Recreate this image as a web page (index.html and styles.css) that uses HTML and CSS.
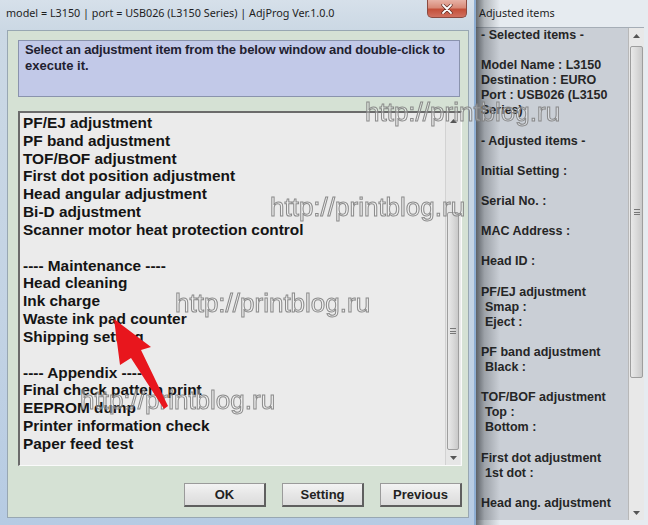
FILE: index.html
```html
<!DOCTYPE html>
<html>
<head>
<meta charset="utf-8">
<link rel="stylesheet" href="styles.css">
</head>
<body>
<div class="screen">
  <div class="main">
    <div class="titlebar">
      <span class="title">model = L3150 | port = USB026 (L3150 Series) | AdjProg Ver.1.0.0</span>
      <div class="close">
        <svg width="12" height="10" viewBox="0 0 12 10"><path d="M2 1 L10 9 M10 1 L2 9" stroke="#5a2a22" stroke-width="3.2" stroke-linecap="round"/><path d="M2 1 L10 9 M10 1 L2 9" stroke="#fff" stroke-width="1.8" stroke-linecap="round"/></svg>
      </div>
    </div>
    <div class="client">
      <div class="info"><span class="nowrap">Select an adjustment item from the below window and double-click to</span><br>execute it.</div>
      <div class="list">
        <div class="items">
          <div class="item">PF/EJ adjustment</div>
          <div class="item">PF band adjustment</div>
          <div class="item">TOF/BOF adjustment</div>
          <div class="item">First dot position adjustment</div>
          <div class="item">Head angular adjustment</div>
          <div class="item">Bi-D adjustment</div>
          <div class="item">Scanner motor heat protection control</div>
          <div class="item"></div>
          <div class="item">---- Maintenance ----</div>
          <div class="item">Head cleaning</div>
          <div class="item">Ink charge</div>
          <div class="item">Waste ink pad counter</div>
          <div class="item">Shipping setting</div>
          <div class="item"></div>
          <div class="item">---- Appendix ----</div>
          <div class="item">Final check pattern print</div>
          <div class="item">EEPROM dump</div>
          <div class="item">Printer information check</div>
          <div class="item">Paper feed test</div>
        </div>
        <div class="vscroll list-scroll">
          <div class="sarrow"><svg width="7" height="4" viewBox="0 0 7 4"><path d="M0 4 L3.5 0 L7 4Z" fill="#555"/></svg></div>
          <div class="track">
            <div class="thumb list-thumb"><span class="grip"></span></div>
          </div>
          <div class="sarrow"><svg width="7" height="4" viewBox="0 0 7 4"><path d="M0 0 L3.5 4 L7 0Z" fill="#555"/></svg></div>
        </div>
      </div>
      <div class="buttons">
        <button class="btn">OK</button>
        <button class="btn">Setting</button>
        <button class="btn">Previous</button>
      </div>
    </div>
  </div>
  <div class="side">
    <div class="side-title">Adjusted items</div>
    <div class="side-body">
      <div class="side-text">
        <div class="ln">- Selected items -</div>
        <div class="ln"></div>
        <div class="ln">Model Name : L3150</div>
        <div class="ln">Destination : EURO</div>
        <div class="ln">Port : USB026 (L3150</div>
        <div class="ln">Series)</div>
        <div class="ln"></div>
        <div class="ln">- Adjusted items -</div>
        <div class="ln"></div>
        <div class="ln">Initial Setting :</div>
        <div class="ln"></div>
        <div class="ln">Serial No. :</div>
        <div class="ln"></div>
        <div class="ln">MAC Address :</div>
        <div class="ln"></div>
        <div class="ln">Head ID :</div>
        <div class="ln"></div>
        <div class="ln">PF/EJ adjustment</div>
        <div class="ln ind">Smap :</div>
        <div class="ln ind">Eject :</div>
        <div class="ln"></div>
        <div class="ln">PF band adjustment</div>
        <div class="ln ind">Black :</div>
        <div class="ln"></div>
        <div class="ln">TOF/BOF adjustment</div>
        <div class="ln ind">Top :</div>
        <div class="ln ind">Bottom :</div>
        <div class="ln"></div>
        <div class="ln">First dot adjustment</div>
        <div class="ln ind">1st dot :</div>
        <div class="ln"></div>
        <div class="ln">Head ang. adjustment</div>
      </div>
      <div class="vscroll side-scroll">
        <div class="sarrow"><svg width="7" height="4" viewBox="0 0 7 4"><path d="M0 4 L3.5 0 L7 4Z" fill="#555"/></svg></div>
        <div class="track side-track">
          <div class="thumb side-thumb"><span class="grip"></span></div>
        </div>
        <div class="sarrow"><svg width="7" height="4" viewBox="0 0 7 4"><path d="M0 0 L3.5 4 L7 0Z" fill="#555"/></svg></div>
      </div>
    </div>
  </div>

  <svg class="overlay" width="648" height="525" viewBox="0 0 648 525">
    <g class="wm-layer">
      <text class="wm" x="365" y="121">http://printblog.ru</text>
      <text class="wm" x="270" y="216">http://printblog.ru</text>
      <text class="wm" x="175" y="312">http://printblog.ru</text>
      <text class="wm" x="80" y="409">http://printblog.ru</text>
    </g>
    <path d="M114 319 L151 347 L141 350 L168 406 L164 409 L131 358 L120 365 Z" fill="#e8161d"/>
  </svg>
</div>
</body>
</html>
```
FILE: styles.css
```css
* { box-sizing: border-box; margin: 0; padding: 0; }
html, body { width: 648px; height: 525px; overflow: hidden; }
body { font-family: "Liberation Sans", Arial, sans-serif; background: #c9d5e2; color: #161616; }

.screen { position: relative; display: flex; width: 648px; height: 525px; }

/* main window */
.main {
  position: relative; z-index: 2;
  width: 476px; height: 525px;
  display: flex; flex-direction: column;
  background: linear-gradient(to bottom, #d6e0ea 0, #cbd8e4 30px, #c3d3e4 60%, #b6cbe3 100%);
  border-right: 2px solid #8eaed3;
}
.titlebar { height: 30px; display: flex; align-items: flex-start; padding-left: 6px; }
.title { margin-top: 5px; font-family: "Noto Sans", sans-serif; font-size: 10.8px; line-height: 16px; color: #1e1e1e; white-space: nowrap; }
.close {
  margin-left: auto; margin-right: 7px;
  width: 40px; height: 18px;
  display: flex; align-items: center; justify-content: center;
  background: linear-gradient(to bottom, #e7b2a6 0%, #d88a78 45%, #c4503a 55%, #d07060 100%);
  border: 1px solid #8a4a40; border-top: none;
  border-radius: 0 0 5px 5px;
}

.client {
  flex: 1;
  margin: 0 5px 7px 7px;
  background: #d5e1d4;
  border: 1px solid #98a7b2;
  padding: 9px 6px 10px 10px;
  display: flex; flex-direction: column;
}
.info {
  height: 57px;
  margin-right: 2px;
  background: #c2c9e8;
  border: 1px solid #8a93ad;
  padding: 1px 6px;
  font-weight: bold; font-size: 13px; line-height: 16px; color: #1f2130;
}
.nowrap { white-space: nowrap; letter-spacing: -0.15px; }
.list {
  margin-top: 14px;
  height: 355px;
  display: flex;
  background: #ebebeb;
  border-top: 2px solid #6b6b6b; border-left: 2px solid #6b6b6b;
  border-right: 1px solid #fafafa; border-bottom: 1px solid #fafafa;
}
.items { flex: 1; padding: 1px 0 0 3px; font-weight: bold; font-size: 15.4px; line-height: 17.83px; color: #141414; }
.item { height: 17.83px; white-space: nowrap; }

.vscroll { width: 15px; display: flex; flex-direction: column; background: #e6e6e6; }
.list-scroll { margin-right: 1px; border-left: 1px solid #d2d2d2; }
.sarrow { height: 15px; display: flex; align-items: center; justify-content: center; }
.track { flex: 1; display: flex; flex-direction: column; justify-content: flex-end; padding: 0 1px; }
.thumb {
  display: flex; align-items: center; justify-content: center;
  background: linear-gradient(to right, #e9e9e9, #dadada 50%, #c9c9c9);
  border: 1px solid #9e9e9e; border-radius: 2px;
}
.list-thumb { height: 238px; }
.grip { width: 6px; height: 6px; border-top: 1px solid #777; border-bottom: 1px solid #777; position: relative; }
.grip::after { content: ""; position: absolute; left: 0; right: 0; top: 2px; border-top: 1px solid #777; }

.buttons { margin-top: 17px; display: flex; justify-content: flex-end; gap: 16px; }
.btn {
  width: 82px; height: 24px;
  font-family: "Liberation Sans", Arial, sans-serif; font-weight: bold; font-size: 13px; color: #222;
  background: linear-gradient(to bottom, #f3f3f3, #e6e6e6 50%, #dcdcdc);
  border: 1px solid #9a9a9a; border-right: 2px solid #5f5f5f; border-bottom: 2px solid #5f5f5f;
}

/* right window */
.side { flex: 1; position: relative; display: flex; flex-direction: column; background: #e6ebf0; }
.side::before {
  content: ""; position: absolute; left: 0; top: 0; bottom: 0; width: 24px; z-index: 1;
  background: linear-gradient(to right, rgba(20,25,30,.6), rgba(20,25,30,.25) 35%, rgba(0,0,0,0));
}
.side-title { height: 27px; padding: 5px 0 0 3px; font-family: "Noto Sans", sans-serif; font-size: 10.8px; line-height: 16px; color: #1e1e1e; }
.side-body { flex: 1; display: flex; margin-bottom: 5px; margin-right: 4px; border-top: 1px solid #a5adb6; }
.side-text { width: 152px; background: #cacfd6; padding: 0 0 0 5px; font-weight: bold; font-size: 12.5px; line-height: 15.1px; color: #262626; overflow: hidden; }
.ln { height: 15.1px; white-space: nowrap; }
.ind { padding-left: 4px; }
.side-scroll { width: 16px; border-left: 1px solid #b8b8b8; background: #e8e8e8; }
.side-track { justify-content: flex-start; }
.side-thumb { height: 332px; margin-top: 3px; }

/* overlays: watermarks + red arrow */
.overlay { position: absolute; left: 0; top: 0; z-index: 6; pointer-events: none; will-change: transform; }
.wm-layer { opacity: 0.9; }
.wm {
  font-family: "Liberation Sans", Arial, sans-serif; font-size: 26px;
  fill: rgba(250,250,250,.4);
  stroke: #808080; stroke-width: 1;
}
```
